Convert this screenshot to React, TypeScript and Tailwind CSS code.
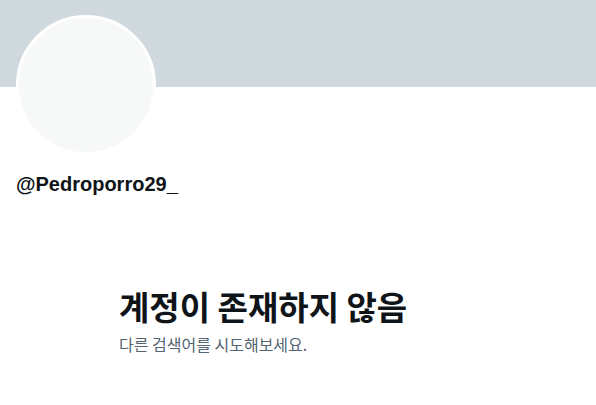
const latin = "font-['Liberation_Sans','Noto_Sans_CJK_KR',sans-serif]";
const korean = "font-['Noto_Sans_CJK_KR',sans-serif]";

export default function App() {
  return (
    <div className="w-[596px] h-[405px] bg-white overflow-hidden">
      <div className="h-[87px] bg-[#cfd9de]" />
      <div className="px-4">
        <div className="-mt-[72px] h-[140px] w-[140px] rounded-full border-[3px] border-white bg-[#f7f9f9]" />
        <p className={`mt-[17px] text-[20px] leading-6 font-bold text-[#0f1419] ${latin}`}>
          @Pedroporro29_
        </p>
      </div>
      <div className="mt-[90px] mx-auto w-[358px]">
        <h2 className={`text-[33px] leading-10 font-bold text-[#0f1419] ${korean}`}>
          계정이 존재하지 않음
        </h2>
        <p className={`mt-2 text-[16px] leading-5 text-[#536471] ${korean}`}>
          다른 검색어를 시도해보세요.
        </p>
      </div>
    </div>
  );
}
